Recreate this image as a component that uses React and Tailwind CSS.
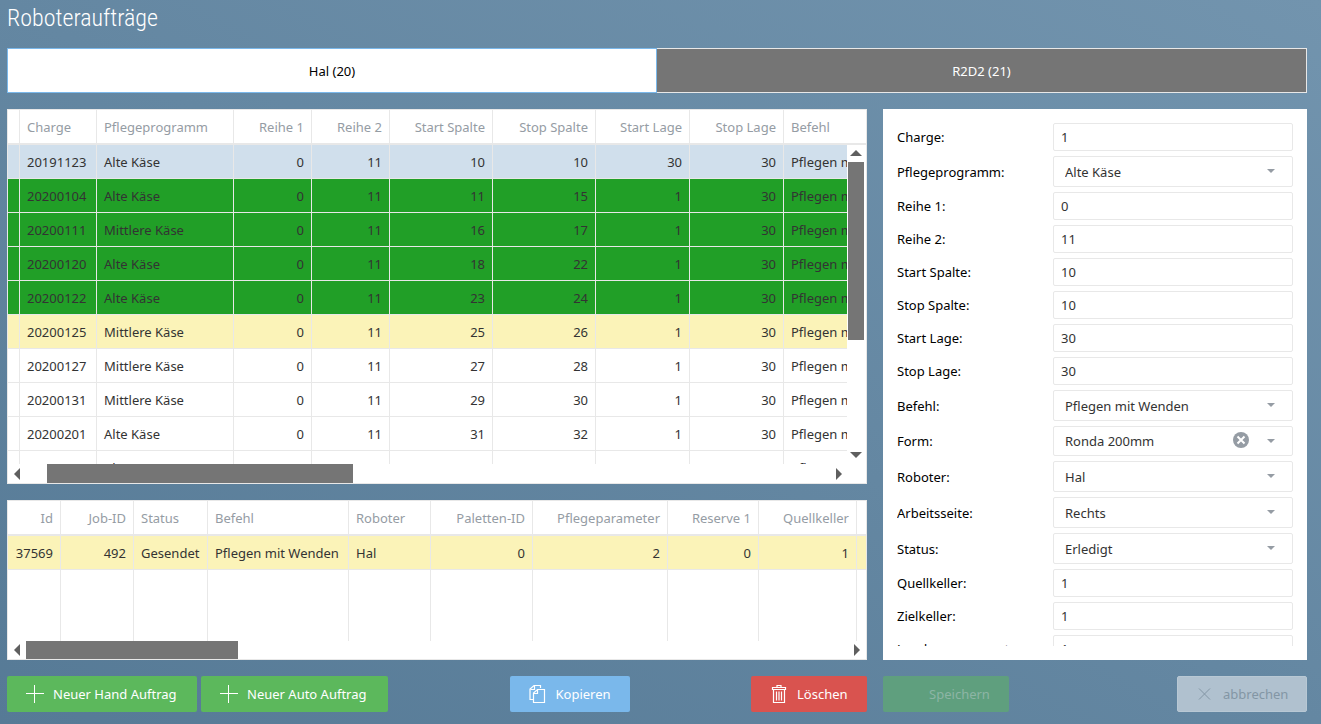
const line = "border-[#e8e8e8]";

const orderColumns = [
  { title: "", width: "w-3" },
  { title: "Charge", width: "w-[77px]" },
  { title: "Pflegeprogramm", width: "w-[137px]" },
  { title: "Reihe 1", width: "w-[78px]", right: true },
  { title: "Reihe 2", width: "w-[78px]", right: true },
  { title: "Start Spalte", width: "w-[103px]", right: true },
  { title: "Stop Spalte", width: "w-[103px]", right: true },
  { title: "Start Lage", width: "w-[94px]", right: true },
  { title: "Stop Lage", width: "w-[94px]", right: true },
  { title: "Befehl", width: "" },
];

const orders = [
  { state: "selected", cells: ["", "20191123", "Alte Käse", 0, 11, 10, 10, 30, 30, "Pflegen mit Wenden"] },
  { state: "done", cells: ["", "20200104", "Alte Käse", 0, 11, 11, 15, 1, 30, "Pflegen mit Wenden"] },
  { state: "done", cells: ["", "20200111", "Mittlere Käse", 0, 11, 16, 17, 1, 30, "Pflegen mit Wenden"] },
  { state: "done", cells: ["", "20200120", "Alte Käse", 0, 11, 18, 22, 1, 30, "Pflegen mit Wenden"] },
  { state: "done", cells: ["", "20200122", "Alte Käse", 0, 11, 23, 24, 1, 30, "Pflegen mit Wenden"] },
  { state: "sent", cells: ["", "20200125", "Mittlere Käse", 0, 11, 25, 26, 1, 30, "Pflegen mit Wenden"] },
  { state: "open", cells: ["", "20200127", "Mittlere Käse", 0, 11, 27, 28, 1, 30, "Pflegen mit Wenden"] },
  { state: "open", cells: ["", "20200131", "Mittlere Käse", 0, 11, 29, 30, 1, 30, "Pflegen mit Wenden"] },
  { state: "open", cells: ["", "20200201", "Alte Käse", 0, 11, 31, 32, 1, 30, "Pflegen mit Wenden"] },
  { state: "open", cells: ["", "20200207", "Alte Käse", 0, 11, 33, 34, 1, 30, "Pflegen mit Wenden"] },
];

const jobColumns = [
  { title: "Id", width: "w-[53px]", right: true },
  { title: "Job-ID", width: "w-[73px]", right: true },
  { title: "Status", width: "w-[74px]" },
  { title: "Befehl", width: "w-[141px]" },
  { title: "Roboter", width: "w-[82px]" },
  { title: "Paletten-ID", width: "w-[102px]", right: true },
  { title: "Pflegeparameter", width: "w-[135px]", right: true },
  { title: "Reserve 1", width: "w-[91px]", right: true },
  { title: "Quellkeller", width: "w-[98px]", right: true },
  { title: "", width: "" },
];

const jobs = [
  { state: "sent", cells: [37569, 492, "Gesendet", "Pflegen mit Wenden", "Hal", 0, 2, 0, 1, ""] },
];

const rowColors = {
  selected: "bg-[#d0dfec]",
  done: "bg-[#219f27]",
  sent: "bg-[#fbf3b8]",
  open: "bg-white",
};

const fields = [
  { label: "Charge", value: "1" },
  { label: "Pflegeprogramm", value: "Alte Käse", select: true },
  { label: "Reihe 1", value: "0" },
  { label: "Reihe 2", value: "11" },
  { label: "Start Spalte", value: "10" },
  { label: "Stop Spalte", value: "10" },
  { label: "Start Lage", value: "30" },
  { label: "Stop Lage", value: "30" },
  { label: "Befehl", value: "Pflegen mit Wenden", select: true },
  { label: "Form", value: "Ronda 200mm", select: true, clear: true },
  { label: "Roboter", value: "Hal", select: true },
  { label: "Arbeitsseite", value: "Rechts", select: true },
  { label: "Status", value: "Erledigt", select: true },
  { label: "Quellkeller", value: "1" },
  { label: "Zielkeller", value: "1" },
  { label: "Landungsparameter", value: "1" },
];

function DataTable({ label, columns, rows, fill }) {
  return (
    <table aria-label={label} className="w-full h-full table-fixed border-separate border-spacing-0 whitespace-nowrap">
      <thead>
        <tr className="h-[35px] text-[#959ca4]">
          {columns.map((col, i) => (
            <th
              key={i}
              className={`${col.width} ${col.title ? "px-[7px]" : "px-0"} border-b-2 border-r last:border-r-0 ${line} font-normal ${
                col.right ? "text-right" : "text-left"
              }`}
            >
              {col.title}
            </th>
          ))}
        </tr>
      </thead>
      <tbody>
        {rows.map((row, r) => (
          <tr key={r} className={`h-[34px] text-[#333333] ${rowColors[row.state]}`}>
            {row.cells.map((cell, i) => (
              <td
                key={i}
                className={`${cell === "" ? "px-0" : "px-[7px]"} border-b border-r last:border-r-0 ${line} overflow-hidden ${
                  columns[i].right ? "text-right" : "text-left"
                }`}
              >
                {cell}
              </td>
            ))}
          </tr>
        ))}
        {/* empty space under the last row keeps the column lines */}
        {fill && (
          <tr>
            {columns.map((col, i) => (
              <td key={i} className={`border-r last:border-r-0 ${line}`} />
            ))}
          </tr>
        )}
      </tbody>
    </table>
  );
}

function Arrow({ points, className }) {
  return (
    <svg viewBox="0 0 12 12" className={`size-3 shrink-0 fill-[#5f5f5f] ${className || ""}`}>
      <polygon points={points} />
    </svg>
  );
}

function Field({ label, value, select, clear }) {
  const id = label.toLowerCase().replace(" ", "-");
  return (
    <div className="grid grid-cols-[156fr_240fr] items-center shrink-0">
      <label htmlFor={id} className="text-black">
        {label}:
      </label>
      {select ? (
        <div className="relative flex">
          <select
            id={id}
            defaultValue={value}
            className={`appearance-none w-full ${clear ? "h-[30px]" : "h-[31px]"} pl-[11px] pr-12 border ${line} rounded-xs bg-white text-[#333333]`}
          >
            <option>{value}</option>
          </select>
          {clear && (
            <button type="button" aria-label="Auswahl löschen" className="absolute right-11 top-1.5">
              <svg viewBox="0 0 16 16" className="size-4">
                <circle cx="8" cy="8" r="8" fill="#959ca4" />
                <path d="M4.5 4.5l7 7M11.5 4.5l-7 7" stroke="#fff" strokeWidth="2" />
              </svg>
            </button>
          )}
          <svg viewBox="0 0 8 4" className="absolute right-[18px] top-[13px] w-2 h-1 fill-[#959ca4] pointer-events-none">
            <polygon points="0,0 8,0 4,4" />
          </svg>
        </div>
      ) : (
        <input
          id={id}
          defaultValue={value}
          className={`w-full h-7 px-[7px] border ${line} rounded-xs bg-white text-[#333333]`}
        />
      )}
    </div>
  );
}

function PlusIcon() {
  return (
    <svg viewBox="0 0 18 18" className="size-[18px] shrink-0" fill="none" stroke="currentColor">
      <path d="M8.5 0v18M0 8.5h18" />
    </svg>
  );
}

function CopyIcon() {
  return (
    <svg viewBox="0 0 18 20" className="w-[18px] h-5 shrink-0" fill="none" stroke="currentColor" strokeWidth="1.2">
      <path d="M4 15.5H1V5L5 1.5H11.5V4" />
      <path d="M1.5 5.5H5.5V1.5" />
      <path d="M4.5 18.5V9L8.5 5.5H15.5V18.5Z" />
      <path d="M4.5 9.5H8.5V5.5" />
    </svg>
  );
}

function TrashIcon() {
  return (
    <svg viewBox="0 0 18 20" className="w-[18px] h-5 shrink-0" fill="none" stroke="currentColor" strokeWidth="1.2">
      <path d="M3.5 5.5V18.5H14.5V5.5M2.5 3.5H15.5V5.5H2.5ZM7 3V1.5H11V3M6.5 7.5V16.5M9 7.5V16.5M11.5 7.5V16.5" />
    </svg>
  );
}

function CloseIcon() {
  return (
    <svg viewBox="0 0 18 18" className="size-[18px] shrink-0" fill="none" stroke="currentColor">
      <path d="M3 3.5l11 11M14 3.5l-11 11" />
    </svg>
  );
}

export default function App() {
  return (
    <div className="h-screen min-h-[600px] flex flex-col pl-[7px] pr-[14px] pb-3 bg-[linear-gradient(to_top_right,#567a96,#7294ae)] font-['Noto_Sans','Segoe_UI',sans-serif] text-[13px] leading-5">
      <header className="h-12 pt-0.5">
        <h1 className="font-['Roboto_Condensed',Roboto,sans-serif] font-light text-2xl text-white">
          Roboteraufträge
        </h1>
      </header>

      <div role="tablist" className="grid grid-cols-2 h-[45px] shrink-0">
        <button role="tab" aria-selected="true" className="border border-[#7ab8eb] bg-white text-black">
          Hal (20)
        </button>
        <button role="tab" aria-selected="false" className={`border border-l-0 ${line} bg-[#757575] text-white`}>
          R2D2 (21)
        </button>
      </div>

      <main className="flex-1 min-h-0 grid grid-cols-[860fr_424fr] gap-4 pt-4">
        <div className="min-h-0 min-w-0 flex flex-col gap-4">
          {/* Orders */}
          <section className={`relative flex-1 min-h-0 flex flex-col border ${line} bg-white`}>
            <div className="flex-1 min-h-0 overflow-hidden">
              <DataTable label="Aufträge" columns={orderColumns} rows={orders} />
            </div>
            <div className="h-[19px] flex items-center pl-[3px] pr-[21px]">
              <Arrow points="9,0 9,12 3,6" />
              <div className="ml-6 w-[306px] h-full bg-[#757575]" />
              <Arrow points="3,0 3,12 9,6" className="ml-auto" />
            </div>
            <div className="absolute top-[35px] right-0 bottom-[19px] w-[19px] pr-px flex flex-col items-center bg-white">
              <Arrow points="0,9 12,9 6,3" className="mt-0.5" />
              <div className="mt-[3px] w-4 h-[178px] bg-[#757575]" />
              <Arrow points="0,3 12,3 6,9" className="mt-auto mb-[3px]" />
            </div>
          </section>

          {/* Robot jobs */}
          <section className={`h-40 flex flex-col border ${line} bg-white`}>
            <div className="flex-1 min-h-0 overflow-hidden">
              <DataTable label="Roboterjobs" columns={jobColumns} rows={jobs} fill />
            </div>
            <div className="h-[18px] flex items-center px-[3px]">
              <Arrow points="9,0 9,12 3,6" />
              <div className="ml-[3px] w-[212px] h-full bg-[#757575]" />
              <Arrow points="3,0 3,12 9,6" className="ml-auto" />
            </div>
          </section>
        </div>

        {/* Details */}
        <form className="min-h-0 p-[14px] bg-white">
          <div className="h-full overflow-hidden flex flex-col gap-[5px]">
            {fields.map((field) => (
              <Field key={field.label} {...field} />
            ))}
          </div>
        </form>
      </main>

      <footer className="grid grid-cols-[860fr_424fr] gap-4 pt-4 text-white whitespace-nowrap">
        <div className="flex justify-between">
          <div className="flex gap-1">
            <button className="flex items-center pl-[19px] gap-[9px] h-9 w-[190px] rounded-xs bg-[#5cb85c]">
              <PlusIcon />
              Neuer Hand Auftrag
            </button>
            <button className="flex items-center pl-[19px] gap-[9px] h-9 w-[187px] rounded-xs bg-[#5cb85c]">
              <PlusIcon />
              Neuer Auto Auftrag
            </button>
          </div>
          <button className="flex items-center pl-[19px] gap-[9px] h-9 w-[120px] rounded-xs bg-[#7ab8eb]">
            <CopyIcon />
            Kopieren
          </button>
          <button className="flex items-center pl-[19px] gap-[9px] h-9 w-[116px] rounded-xs bg-[#d9534f]">
            <TrashIcon />
            Löschen
          </button>
        </div>
        <div className="flex justify-between">
          <button disabled className="h-9 w-[126px] pl-[27px] rounded-xs bg-[#5f9f7e] text-[#8db5a5]">
            Speichern
          </button>
          <button
            disabled
            className="flex items-center pl-[18px] gap-[9px] h-9 w-[130px] rounded-xs border border-[#b8c8d4] bg-[#b0c1cf] text-[#8396a5]"
          >
            <CloseIcon />
            abbrechen
          </button>
        </div>
      </footer>
    </div>
  );
}
